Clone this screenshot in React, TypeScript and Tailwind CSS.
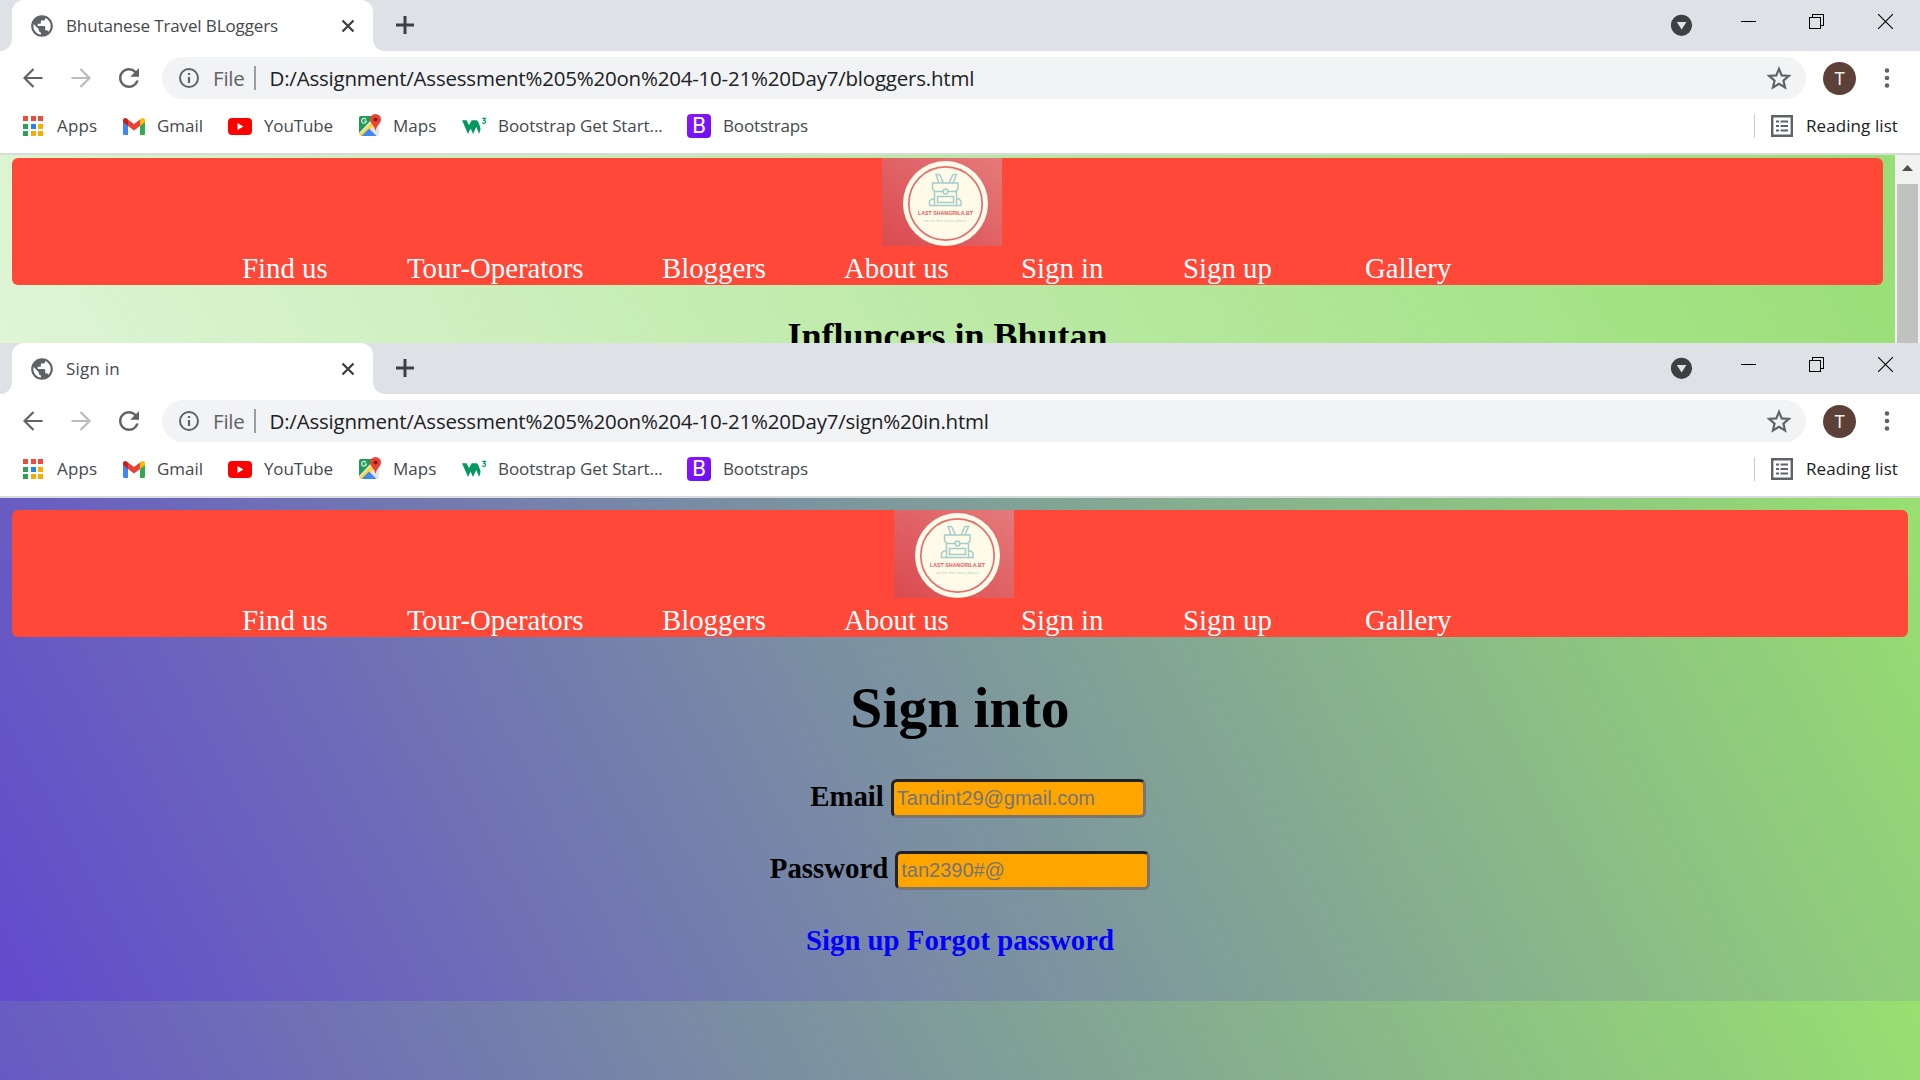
import React from "react";
import { MdPublic, MdRefresh } from "react-icons/md";

const ui = "font-['Open_Sans','Noto_Sans',sans-serif]";
const serif = "font-['Liberation_Serif',serif]";

function Gmail() {
  return (
    <svg viewBox="0 0 22 17" className="h-[17px] w-[22px]">
      <path d="M0 3v12.5A1.5 1.5 0 0 0 1.5 17H5V7z" fill="#4285f4" />
      <path d="M22 3v12.5a1.5 1.5 0 0 1-1.500 1.500H17V7z" fill="#34a853" />
      <path d="M17 1.500V8l5-4V2.300C22 .2 19.600-.7 18 .7z" fill="#fbbc04" />
      <path d="M5 8V1.500l6 4.500 6-4.500V8l-6 4.500z" fill="#ea4335" />
      <path d="M0 2.300V4l5 4V1.500L4 .7C2.400-.7 0 .2 0 2.300z" fill="#c5221f" />
    </svg>
  );
}

function YouTube() {
  return (
    <svg viewBox="0 0 24 17" className="h-[17px] w-6">
      <rect width="24" height="17" rx="4" fill="#f00" />
      <path d="M9.500 5v7l6-3.500z" fill="#fff" />
    </svg>
  );
}

function Maps() {
  return (
    <svg viewBox="0 0 24 24" className="h-6 w-6">
      <rect x="1" y="2" width="20" height="20" rx="2" fill="#e3e5e8" />
      <path d="M3 2h14L1 19V4a2 2 0 0 1 2-2z" fill="#1f9d57" />
      <path d="M1 21L15 7l3 3L5 22H3z" fill="#fdd835" />
      <path d="M3.500 22L11 14.500 18.500 22z" fill="#4285f4" />
      <path d="M8 5.500A2.400 2.400 0 1 0 8.400 7H6.300" fill="none" stroke="#d5f0df" strokeWidth="1.200" />
      <path d="M17.500 0a5.500 5.500 0 0 1 5.500 5.500c0 4-4.500 5.500-5.500 11.500-1-6-5.500-7.500-5.500-11.500A5.500 5.500 0 0 1 17.500 0z" fill="#ea4335" />
      <circle cx="17.500" cy="5.500" r="2" fill="#7d1f18" />
    </svg>
  );
}

function W3() {
  return (
    <svg viewBox="0 0 25 20" className="h-5 w-[25px]">
      <path d="M0 4.300h4.600L7 9l2.700-4.700h5.200c1.500 1.800 3 5 3.700 8.700l-1.500 5L14.300 11 11 18 8.600 12.500 6 18z" fill="#059862" />
      <path d="M20.300 2.300h3.200l-1.600 2.100c2.200 0 2.200 3 .1 3-.8 0-1.400-.3-1.800-.9" fill="none" stroke="#059862" strokeWidth="1.200" />
    </svg>
  );
}

const APP_COLORS = ["#f04a3a", "#f04a3a", "#f04a3a", "#2da058", "#1e88e5", "#f9ab00", "#2da058", "#f9ab00", "#f9ab00"];

function Apps() {
  return (
    <div className="grid h-5 w-5 grid-cols-3 justify-between gap-[2.500px]">
      {APP_COLORS.map((c, i) => (
        <span key={i} className="h-[5px] w-[5px]" style={{ background: c }} />
      ))}
    </div>
  );
}

function ChromeWindow({ title, url, titleCls }: { title: string; url: string; titleCls: string }) {
  return (
    <header className={`${ui} h-[155px] w-full shrink-0 bg-white`}>
      <div className="flex h-[51px] bg-[#dee1e6]">
        <div className="h-full w-3 bg-white">
          <div className="h-full w-full rounded-br-[12px] bg-[#dee1e6]" />
        </div>
        <div className="flex h-full w-[361px] items-center rounded-t-[12px] bg-white pr-[17px] pl-[17px] text-[#45484c]">
          <MdPublic className="h-[26px] w-[26px] shrink-0 text-[#5f6368]" />
          <span className={`ml-[11px] flex-1 whitespace-nowrap text-[17px] ${titleCls}`}>{title}</span>
          <svg viewBox="0 0 14 14" className="mr-[1px] h-[14px] w-[14px]">
            <path d="M1.500 1.500l11 11M12.500 1.500l-11 11" stroke="#3c4043" strokeWidth="2.300" />
          </svg>
        </div>
        <div className="h-full w-3 bg-white">
          <div className="h-full w-full rounded-bl-[12px] bg-[#dee1e6]" />
        </div>
        <svg viewBox="0 0 18 18" className="mt-[16px] ml-[11px] h-[18px] w-[18px]">
          <path d="M9 0v18M0 9h18" stroke="#3c4043" strokeWidth="3" />
        </svg>
        <div className="flex-1" />
        <svg viewBox="0 0 22 22" className="mt-[14px] mr-[48px] h-[22px] w-[22px]">
          <circle cx="10.500" cy="11.300" r="10.600" fill="#3c4043" />
          <path d="M5.800 8h9.600L10.600 15.500z" fill="#dee1e6" />
        </svg>
        <svg viewBox="0 0 15 15" className="mt-[14px] mr-[53px] h-[15px] w-[15px]" shapeRendering="crispEdges">
          <path d="M0 7.500h15" stroke="#000" />
        </svg>
        <svg viewBox="0 0 15 15" className="mt-[14px] mr-[54px] h-[15px] w-[15px]" shapeRendering="crispEdges">
          <path d="M.5 3.500h11v11H.5zM3.500 3.500v-3h11v11h-3" stroke="#000" fill="none" />
        </svg>
        <svg viewBox="0 0 15 15" className="mt-[14px] mr-[27px] h-[15px] w-[15px]">
          <path d="M0 0l15 15M15 0L0 15" stroke="#000" strokeWidth="1.100" />
        </svg>
      </div>

      <div className="flex h-[54px] items-center pl-[23px] text-[#5f6368]">
        <svg viewBox="0 0 20 20" className="h-5 w-5">
          <path d="M19.500 10H1.500M10.500 1L1.500 10l9 9" fill="none" stroke="#5f6368" strokeWidth="2.200" />
        </svg>
        <svg viewBox="0 0 20 20" className="ml-7 h-5 w-5">
          <path d="M.5 10h18M9.500 1l9 9-9 9" fill="none" stroke="#b9bbbe" strokeWidth="2.200" />
        </svg>
        <MdRefresh className="ml-[23px] h-[30px] w-[30px]" />
        <div className="ml-[18px] flex h-[42px] w-[1644px] items-center rounded-full bg-[#f1f3f4] pr-[14px] pl-[17px]">
          <svg viewBox="0 0 20 20" className="h-5 w-5">
            <circle cx="10" cy="10" r="9" fill="none" stroke="#5f6368" strokeWidth="2" />
            <path d="M10 9v6M10 5v2" stroke="#5f6368" strokeWidth="2.200" />
          </svg>
          <span className="ml-[14px] w-[31px] whitespace-nowrap text-[20.500px] tracking-[-0.200px]">File</span>
          <span className="ml-[10px] h-6 w-[2px] bg-[#9a9da1]" />
          <span className="ml-[13.500px] whitespace-nowrap text-[20.500px] tracking-[-0.210px] text-[#202124]">{url}</span>
          <div className="flex-1" />
          <svg viewBox="0 0 24 24" className="h-[26px] w-[26px]">
            <path d="M12 3.500l2.500 6.100 6.600.5-5 4.300 1.500 6.400L12 17.400l-5.600 3.400 1.500-6.400-5-4.300 6.600-.5z" fill="none" stroke="#5f6368" strokeWidth="2" />
          </svg>
        </div>
        <div className="ml-[17px] flex h-[33px] w-[33px] items-center justify-center rounded-full bg-[#5d4037] font-['Roboto',sans-serif] text-[18px] text-[#eee]">T</div>
        <svg viewBox="0 0 6 20" className="ml-[28px] h-5 w-[6px]">
          <circle cx="3" cy="2.500" r="2.300" fill="#5f6368" />
          <circle cx="3" cy="10" r="2.300" fill="#5f6368" />
          <circle cx="3" cy="17.500" r="2.300" fill="#5f6368" />
        </svg>
      </div>

      <div className="flex h-[50px] border-b-2 border-[#d9dadb] pb-[6px] text-[17px] whitespace-nowrap text-[#45484c]">
        <div className="flex w-[100px] items-center pl-[23px]"><Apps /><span className="ml-[14px] tracking-[0.150px]">Apps</span></div>
        <div className="flex w-[105px] items-center pl-[23px]"><Gmail /><span className="ml-[12px]">Gmail</span></div>
        <div className="flex w-[132px] items-center pl-[23px]"><YouTube /><span className="ml-[12px] tracking-[-0.150px]">YouTube</span></div>
        <div className="flex w-[103px] items-center pl-[21px]"><Maps /><span className="ml-[11px]">Maps</span></div>
        <div className="flex w-[224px] items-center pl-[22px]"><W3 /><span className="ml-[11px] tracking-[-0.080px]">Bootstrap Get Start...</span></div>
        <div className="flex items-center pl-[23px]">
          <span className="flex h-6 w-6 items-center justify-center rounded-[4px] bg-linear-to-br from-[#9013fe] to-[#6610f2] font-['Roboto',sans-serif] text-[22px] leading-none font-normal text-white">B</span>
          <span className="ml-[12px] tracking-[-0.150px]">Bootstraps</span>
        </div>
        <div className="flex-1" />
        <div className="flex w-[166px] items-center">
          <span className="h-6 w-px bg-[#c9cbce]" />
          <svg viewBox="0 0 22 22" className="ml-[16px] h-[22px] w-[22px]">
            <path d="M1.200 1.200h19.600v19.600H1.200z" fill="none" stroke="#5f6368" strokeWidth="2.400" />
            <path d="M5 6.500h3M5 11h3M5 15.500h3M9.500 6.500H17M9.500 11H17M9.500 15.500H17" stroke="#5f6368" strokeWidth="2.200" />
          </svg>
          <span className="ml-[13px] tracking-[0.080px] text-[#202124]">Reading list</span>
        </div>
      </div>
    </header>
  );
}

function Logo() {
  return (
    <svg viewBox="0 0 120 88" className="mr-3 block h-[88px] w-[120px] shrink-0">
      <defs>
        <linearGradient id="rose" x1="0" y1="1" x2="1" y2="0">
          <stop offset="0" stopColor="#da4a50" />
          <stop offset="1" stopColor="#e57a7a" />
        </linearGradient>
      </defs>
      <rect width="120" height="88" fill="url(#rose)" />
      <circle cx="63.500" cy="45.500" r="42.500" fill="#fffbe8" />
      <circle cx="63.500" cy="45.500" r="36.700" fill="none" stroke="#e0716c" strokeWidth="1.700" />
      <g fill="none" stroke="#a3cdcb" strokeWidth="1.500">
        <path d="M57 25l-3-8.500h3.500l4 8.500M67 25l4-8.500h3.500l-3.500 8.500M50.500 25h25.500v6l-2.500 2.500H53L50.500 31zM52.500 33.500v14h22v-14M55.500 38.500h16v6h-16z" />
        <path d="M52.500 41H50l-2.500 2v4.500h5M74.500 41H77l2 2v4.500h-5" />
        <circle cx="63.500" cy="33.500" r="2.400" fill="#fffbe8" />
      </g>
      <text x="36" y="57" textLength="55" lengthAdjust="spacingAndGlyphs" fontFamily="Liberation Sans" fontWeight="700" fontSize="5.600" fill="#dc5a5c">LAST SHANGRILA.BT</text>
      <text x="42" y="64" textLength="43" lengthAdjust="spacingAndGlyphs" fontFamily="Liberation Sans" fontSize="4" fill="#b9d3cd">on to the next place</text>
    </svg>
  );
}

function Nav() {
  return (
    <nav className={`${serif} flex h-[127px] shrink-0 flex-col items-center rounded-[6px] bg-[#ff4838] text-[28.800px] leading-[33px] font-normal whitespace-nowrap text-white`}>
      <Logo />
      <div className="mt-[6px] flex w-full pl-[230px]">
        <a className="w-[165px]">Find us</a>
        <a className="w-[255px]">Tour-Operators</a>
        <a className="w-[182px]">Bloggers</a>
        <a className="w-[177px]">About us</a>
        <a className="w-[162px]">Sign in</a>
        <a className="w-[182px]">Sign up</a>
        <a>Gallery</a>
      </div>
    </nav>
  );
}

function Field({ label, value }: { label: string; value: string }) {
  return (
    <div className="flex h-[39px] items-center justify-center">
      <label className="mr-[7px] -translate-y-[2px] leading-[33px]">{label}</label>
      <input
        placeholder={value}
        className="h-[39px] w-[255px] rounded-[6px] border-3 border-t-[#222] border-r-[#767676] border-b-[#767676] border-l-[#222] bg-[#ffa500] px-[3px] font-['Liberation_Sans',sans-serif] text-[20px] font-normal placeholder:text-[#757575]"
      />
    </div>
  );
}

export default function App() {
  return (
    <div className="flex h-[1080px] w-[1920px] flex-col overflow-hidden">
      <section className="flex h-[343px] shrink-0 flex-col overflow-hidden">
        <ChromeWindow title="Bhutanese Travel BLoggers" url="D:/Assignment/Assessment%205%20on%204-10-21%20Day7/bloggers.html" titleCls="tracking-[-0.120px]" />
        <div className="flex h-[188px]">
          <main className="w-[1895px] overflow-hidden bg-[linear-gradient(60deg,#dff5d6,#97de74)] px-3 pt-[3px]">
            <Nav />
            <h2 className={`${serif} mt-[31px] text-center text-[36px] leading-[41px] font-bold text-black`}>Influncers in Bhutan</h2>
          </main>
          <aside className="flex w-[25px] flex-col items-center bg-[#f1f1f1]">
            <svg viewBox="0 0 11 6" className="mt-[10px] mb-[13px] h-[6px] w-[11px] shrink-0">
              <path d="M0 6L5.500 0 11 6z" fill="#505050" />
            </svg>
            <div className="w-[21px] flex-1 bg-[#c1c1c1]" />
          </aside>
        </div>
      </section>
      <section className="flex flex-1 flex-col overflow-hidden">
        <ChromeWindow title="Sign in" url="D:/Assignment/Assessment%205%20on%204-10-21%20Day7/sign%20in.html" titleCls="tracking-[0.200px]" />
        <main className={`${serif} flex-1 bg-[linear-gradient(62deg,#624acd,#97e070)] bg-[length:100%_503px] bg-repeat-y px-3 pt-3 text-[28.800px] font-bold text-black`}>
          <Nav />
          <h1 className="mt-[38px] text-center text-[57.600px] leading-[66px]">Sign into</h1>
          <div className="mt-[38px] pl-9"><Field label="Email" value="Tandint29@gmail.com" /></div>
          <div className="mt-[33px]"><Field label="Password" value="tan2390#@" /></div>
          <p className="mt-[34px] text-center leading-[33px] text-[#00f]">Sign up Forgot password</p>
        </main>
      </section>
    </div>
  );
}
